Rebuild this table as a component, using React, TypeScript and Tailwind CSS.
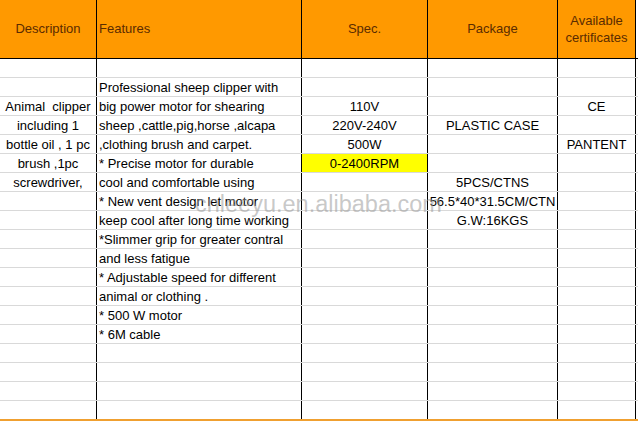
const features = [
  "",
  "Professional sheep clipper with",
  "big power motor for shearing",
  "sheep ,cattle,pig,horse ,alcapa",
  ",clothing brush and carpet.",
  "* Precise motor for durable",
  "cool and comfortable using",
  "* New vent design let motor",
  "keep cool after long time working",
  "*Slimmer grip for greater contral",
  "and less fatigue",
  "* Adjustable speed for different",
  "animal or clothing .",
  "* 500 W motor",
  "* 6M cable",
  "",
  "",
  "",
  "",
];

const description: Record<number, string> = {
  2: "Animal  clipper",
  3: "including 1",
  4: "bottle oil , 1 pc",
  5: "brush ,1pc",
  6: "screwdriver,",
};

const spec: Record<number, string> = {
  2: "110V",
  3: "220V-240V",
  4: "500W",
  5: "0-2400RPM",
};

const pack: Record<number, string> = {
  3: "PLASTIC CASE",
  6: "5PCS/CTNS",
  7: "56.5*40*31.5CM/CTN",
  8: "G.W:16KGS",
};

const certs: Record<number, string> = {
  2: "CE",
  4: "PANTENT",
};

export default function App() {
  return (
    <div className="relative h-[421px] w-[638px] overflow-hidden bg-white font-['Liberation_Sans',Arial,sans-serif] text-[13px] text-black">
      {/* header */}
      <div className="flex h-[59px] border-b border-black">
        <div className="flex w-[97px] items-center justify-center border-r border-black bg-[#ff9900] text-[#5b2c00]">Description</div>
        <div className="flex w-[205px] items-center border-r border-black bg-[#ff9900] pl-[2px] text-[#5b2c00]">Features</div>
        <div className="flex w-[126px] items-center justify-center border-r border-black bg-[#ff9900] text-[#5b2c00]">Spec.</div>
        <div className="flex w-[130px] items-center justify-center border-r border-black bg-[#ff9900] text-[#5b2c00]">Package</div>
        <div className="flex w-[78px] flex-col items-center justify-center border-r border-black bg-[#ff9900] leading-[17px] text-[#5b2c00]">
          <span>Available</span>
          <span>certificates</span>
        </div>
        <div className="flex-1" />
      </div>

      {/* body rows */}
      {features.map((f, i) => {
        const last = i === features.length - 1;
        const rowBorder = last ? "border-b-2 border-b-[#f0a030] h-[20px]" : "border-b border-b-[#d9d9d9] h-[19px]";
        return (
          <div key={i} className={`flex ${rowBorder}`}>
            <div className="flex w-[97px] items-center justify-center whitespace-pre border-r border-r-black pt-px">{description[i] ?? ""}</div>
            <div className="flex w-[205px] items-center whitespace-nowrap border-r border-r-black pl-[2px] pt-px">{f}</div>
            <div className={`flex w-[126px] items-center justify-center border-r border-r-black pt-px ${i === 5 ? "bg-[#ffff00]" : ""}`}>{spec[i] ?? ""}</div>
            <div className="flex w-[130px] items-center justify-center border-r border-r-black pt-px">{pack[i] ?? ""}</div>
            <div className="flex w-[78px] items-center justify-center border-r border-r-black pt-px">{certs[i] ?? ""}</div>
            <div className="flex-1" />
          </div>
        );
      })}

      {/* watermark */}
      <div className="pointer-events-none absolute left-[195px] top-[193px] whitespace-nowrap text-[23.5px] leading-none text-[#9a9a9a8c]">
        cnleeyu.en.alibaba.com
      </div>
    </div>
  );
}
